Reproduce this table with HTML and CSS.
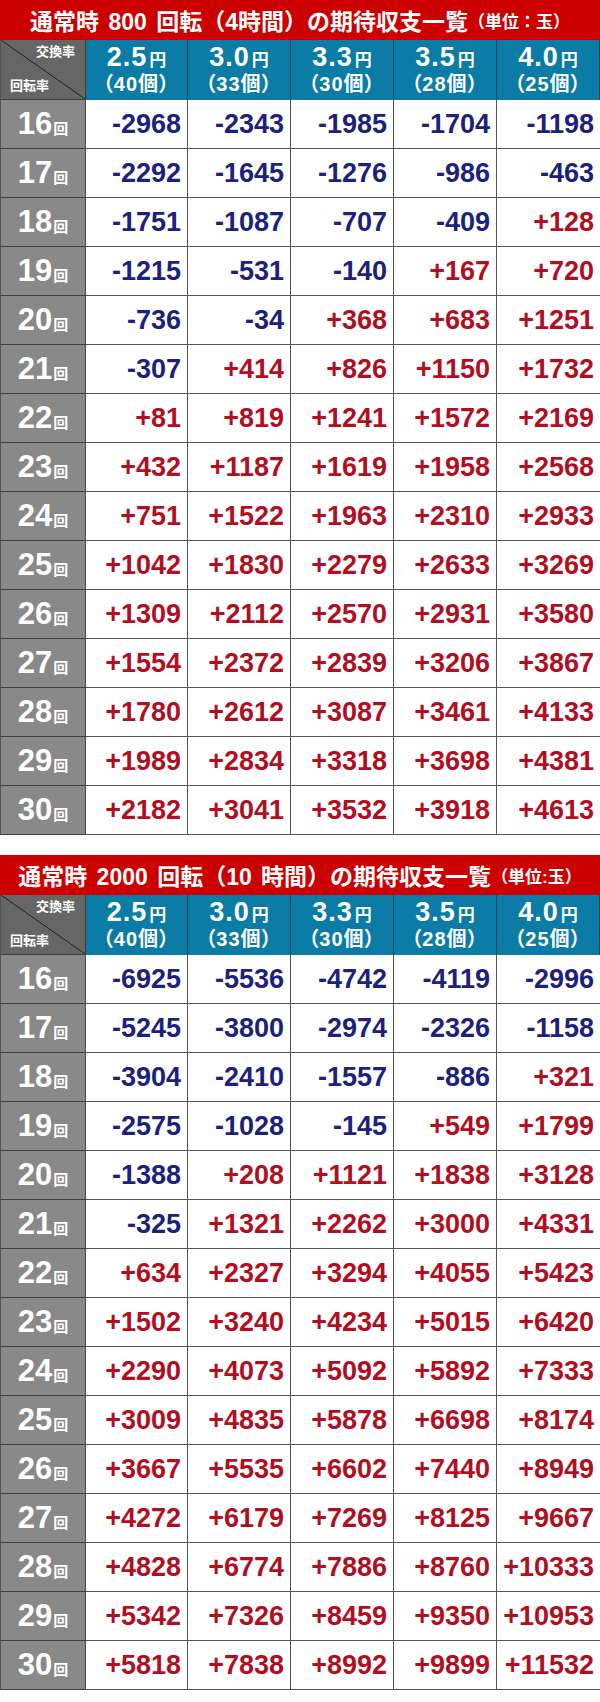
FILE: index.html
```html
<!DOCTYPE html>
<html lang="ja">
<head>
<meta charset="utf-8">
<link rel="stylesheet" href="styles.css">
</head>
<body>
<div class="page">
  <section class="block">
    <div class="title"><span class="t-main">通常時 800 回転（4時間）の期待収支一覧</span><span class="t-unit">（単位：玉）</span></div>
    <div class="grid">
      <div class="corner"><span class="c-top">交換率</span><span class="c-bot">回転率</span></div>
      <div class="hd"><div class="rate">2.5<span class="yen">円</span></div><div class="cnt">（40個）</div></div>
      <div class="hd"><div class="rate">3.0<span class="yen">円</span></div><div class="cnt">（33個）</div></div>
      <div class="hd"><div class="rate">3.3<span class="yen">円</span></div><div class="cnt">（30個）</div></div>
      <div class="hd"><div class="rate">3.5<span class="yen">円</span></div><div class="cnt">（28個）</div></div>
      <div class="hd"><div class="rate">4.0<span class="yen">円</span></div><div class="cnt">（25個）</div></div>

      <div class="lb">16<span class="kai">回</span></div><div class="c n">-2968</div><div class="c n">-2343</div><div class="c n">-1985</div><div class="c n">-1704</div><div class="c n">-1198</div>
      <div class="lb">17<span class="kai">回</span></div><div class="c n">-2292</div><div class="c n">-1645</div><div class="c n">-1276</div><div class="c n">-986</div><div class="c n">-463</div>
      <div class="lb">18<span class="kai">回</span></div><div class="c n">-1751</div><div class="c n">-1087</div><div class="c n">-707</div><div class="c n">-409</div><div class="c p">+128</div>
      <div class="lb">19<span class="kai">回</span></div><div class="c n">-1215</div><div class="c n">-531</div><div class="c n">-140</div><div class="c p">+167</div><div class="c p">+720</div>
      <div class="lb">20<span class="kai">回</span></div><div class="c n">-736</div><div class="c n">-34</div><div class="c p">+368</div><div class="c p">+683</div><div class="c p">+1251</div>
      <div class="lb">21<span class="kai">回</span></div><div class="c n">-307</div><div class="c p">+414</div><div class="c p">+826</div><div class="c p">+1150</div><div class="c p">+1732</div>
      <div class="lb">22<span class="kai">回</span></div><div class="c p">+81</div><div class="c p">+819</div><div class="c p">+1241</div><div class="c p">+1572</div><div class="c p">+2169</div>
      <div class="lb">23<span class="kai">回</span></div><div class="c p">+432</div><div class="c p">+1187</div><div class="c p">+1619</div><div class="c p">+1958</div><div class="c p">+2568</div>
      <div class="lb">24<span class="kai">回</span></div><div class="c p">+751</div><div class="c p">+1522</div><div class="c p">+1963</div><div class="c p">+2310</div><div class="c p">+2933</div>
      <div class="lb">25<span class="kai">回</span></div><div class="c p">+1042</div><div class="c p">+1830</div><div class="c p">+2279</div><div class="c p">+2633</div><div class="c p">+3269</div>
      <div class="lb">26<span class="kai">回</span></div><div class="c p">+1309</div><div class="c p">+2112</div><div class="c p">+2570</div><div class="c p">+2931</div><div class="c p">+3580</div>
      <div class="lb">27<span class="kai">回</span></div><div class="c p">+1554</div><div class="c p">+2372</div><div class="c p">+2839</div><div class="c p">+3206</div><div class="c p">+3867</div>
      <div class="lb">28<span class="kai">回</span></div><div class="c p">+1780</div><div class="c p">+2612</div><div class="c p">+3087</div><div class="c p">+3461</div><div class="c p">+4133</div>
      <div class="lb">29<span class="kai">回</span></div><div class="c p">+1989</div><div class="c p">+2834</div><div class="c p">+3318</div><div class="c p">+3698</div><div class="c p">+4381</div>
      <div class="lb">30<span class="kai">回</span></div><div class="c p">+2182</div><div class="c p">+3041</div><div class="c p">+3532</div><div class="c p">+3918</div><div class="c p">+4613</div>
    </div>
  </section>

  <section class="block">
    <div class="title"><span class="t-main">通常時 2000 回転（10 時間）の期待収支一覧</span><span class="t-unit">（単位:玉）</span></div>
    <div class="grid">
      <div class="corner"><span class="c-top">交換率</span><span class="c-bot">回転率</span></div>
      <div class="hd"><div class="rate">2.5<span class="yen">円</span></div><div class="cnt">（40個）</div></div>
      <div class="hd"><div class="rate">3.0<span class="yen">円</span></div><div class="cnt">（33個）</div></div>
      <div class="hd"><div class="rate">3.3<span class="yen">円</span></div><div class="cnt">（30個）</div></div>
      <div class="hd"><div class="rate">3.5<span class="yen">円</span></div><div class="cnt">（28個）</div></div>
      <div class="hd"><div class="rate">4.0<span class="yen">円</span></div><div class="cnt">（25個）</div></div>

      <div class="lb">16<span class="kai">回</span></div><div class="c n">-6925</div><div class="c n">-5536</div><div class="c n">-4742</div><div class="c n">-4119</div><div class="c n">-2996</div>
      <div class="lb">17<span class="kai">回</span></div><div class="c n">-5245</div><div class="c n">-3800</div><div class="c n">-2974</div><div class="c n">-2326</div><div class="c n">-1158</div>
      <div class="lb">18<span class="kai">回</span></div><div class="c n">-3904</div><div class="c n">-2410</div><div class="c n">-1557</div><div class="c n">-886</div><div class="c p">+321</div>
      <div class="lb">19<span class="kai">回</span></div><div class="c n">-2575</div><div class="c n">-1028</div><div class="c n">-145</div><div class="c p">+549</div><div class="c p">+1799</div>
      <div class="lb">20<span class="kai">回</span></div><div class="c n">-1388</div><div class="c p">+208</div><div class="c p">+1121</div><div class="c p">+1838</div><div class="c p">+3128</div>
      <div class="lb">21<span class="kai">回</span></div><div class="c n">-325</div><div class="c p">+1321</div><div class="c p">+2262</div><div class="c p">+3000</div><div class="c p">+4331</div>
      <div class="lb">22<span class="kai">回</span></div><div class="c p">+634</div><div class="c p">+2327</div><div class="c p">+3294</div><div class="c p">+4055</div><div class="c p">+5423</div>
      <div class="lb">23<span class="kai">回</span></div><div class="c p">+1502</div><div class="c p">+3240</div><div class="c p">+4234</div><div class="c p">+5015</div><div class="c p">+6420</div>
      <div class="lb">24<span class="kai">回</span></div><div class="c p">+2290</div><div class="c p">+4073</div><div class="c p">+5092</div><div class="c p">+5892</div><div class="c p">+7333</div>
      <div class="lb">25<span class="kai">回</span></div><div class="c p">+3009</div><div class="c p">+4835</div><div class="c p">+5878</div><div class="c p">+6698</div><div class="c p">+8174</div>
      <div class="lb">26<span class="kai">回</span></div><div class="c p">+3667</div><div class="c p">+5535</div><div class="c p">+6602</div><div class="c p">+7440</div><div class="c p">+8949</div>
      <div class="lb">27<span class="kai">回</span></div><div class="c p">+4272</div><div class="c p">+6179</div><div class="c p">+7269</div><div class="c p">+8125</div><div class="c p">+9667</div>
      <div class="lb">28<span class="kai">回</span></div><div class="c p">+4828</div><div class="c p">+6774</div><div class="c p">+7886</div><div class="c p">+8760</div><div class="c p">+10333</div>
      <div class="lb">29<span class="kai">回</span></div><div class="c p">+5342</div><div class="c p">+7326</div><div class="c p">+8459</div><div class="c p">+9350</div><div class="c p">+10953</div>
      <div class="lb">30<span class="kai">回</span></div><div class="c p">+5818</div><div class="c p">+7838</div><div class="c p">+8992</div><div class="c p">+9899</div><div class="c p">+11532</div>
    </div>
  </section>
</div>
</body>
</html>
```

FILE: styles.css
```css
* { box-sizing: border-box; }
html, body { margin: 0; padding: 0; background: #ffffff; }
body {
  font-family: "Liberation Sans", "Noto Sans CJK JP", sans-serif;
  font-weight: bold;
}
.page {
  width: 600px;
  display: flex;
  flex-direction: column;
  gap: 20px;
  padding-bottom: 12px;
}
.title {
  height: 40px;
  background: #cc0000;
  color: #ffffff;
  display: flex;
  align-items: center;
  justify-content: center;
  white-space: nowrap;
}
.t-main {
  font-size: 23px;
  word-spacing: 3px;
}
.t-unit {
  font-size: 17px;
}
.grid {
  display: grid;
  grid-template-columns: 86px 102px 103px 103px 103px 103px;
  grid-template-rows: 60px;
  grid-auto-rows: 49px;
}
.corner {
  background: linear-gradient(to top right, #666666 calc(50% - 0.8px), #222222 50%, #666666 calc(50% + 0.8px));
  border-bottom: 1px solid #3d3d3d;
  border-right: 1px solid #3d3d3d;
  border-left: 1px solid #555555;
  color: #ffffff;
  font-size: 13px;
  display: flex;
  flex-direction: column;
  justify-content: space-between;
  padding: 4px 10px 5px 9px;
  line-height: 16px;
}
.c-top { align-self: flex-end; }
.c-bot { align-self: flex-start; }
.hd {
  background: #0a7ca6;
  color: #ffffff;
  border-right: 1px solid #1e4658;
  display: flex;
  flex-direction: column;
  align-items: center;
  justify-content: center;
  padding-top: 2px;
}
.hd:last-child { border-right: none; }
.rate {
  font-size: 27px;
  line-height: 23px;
  letter-spacing: 1px;
}
.yen {
  font-size: 17px;
  margin-left: 2px;
  letter-spacing: 0;
}
.cnt {
  font-size: 20px;
  line-height: 24px;
  font-feature-settings: "palt";
  letter-spacing: 1px;
}
.lb {
  background: #898989;
  color: #ffffff;
  border-left: 1px solid #555555;
  border-right: 1px solid #4a4a4a;
  border-bottom: 1px solid #3f3f3f;
  font-size: 31px;
  line-height: 48px;
  text-align: center;
  white-space: nowrap;
}
.kai {
  font-size: 15px;
  margin-left: 1px;
}
.c {
  border-right: 1px solid #555555;
  border-bottom: 1px solid #555555;
  font-size: 27px;
  line-height: 48px;
  text-align: right;
  padding-right: 6px;
  white-space: nowrap;
}
.c:nth-child(6n) { border-right: none; }
.n { color: #1b217d; }
.p { color: #b10f1f; }
```
